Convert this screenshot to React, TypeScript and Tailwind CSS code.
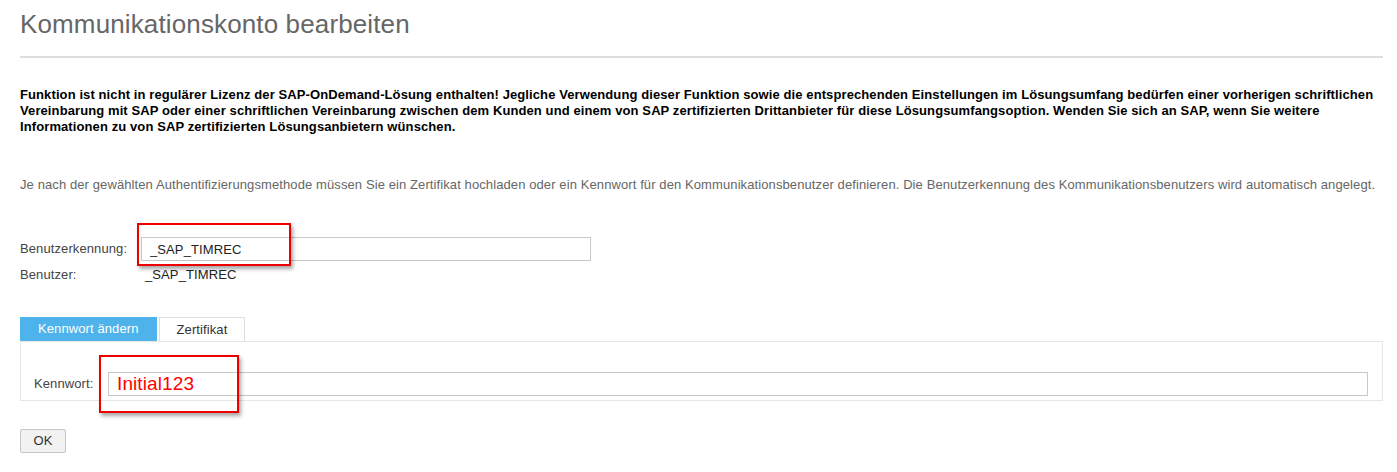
import { useState } from "react";

export default function App() {
  const [tab, setTab] = useState("kennwort");

  return (
    <div className="min-h-screen bg-white pl-[20px] pr-[14px] pt-[9px] tracking-[0.1px] font-['Liberation_Sans',Arial,sans-serif]">

      {/* Header */}
      <h1 className="text-[26px] leading-[30px] tracking-[0.13px] text-[#666666] font-normal">
        Kommunikationskonto bearbeiten
      </h1>
      <div className="mt-[17px] h-[2px] bg-[#dedede]" />

      {/* Lizenzhinweis */}
      <p className="mt-[29px] text-[13px] leading-[16px] font-bold text-black">
        Funktion ist nicht in regulärer Lizenz der SAP-OnDemand-Lösung enthalten! Jegliche Verwendung dieser Funktion sowie die entsprechenden Einstellungen im Lösungsumfang bedürfen einer vorherigen schriftlichen Vereinbarung mit SAP oder einer schriftlichen Vereinbarung zwischen dem Kunden und einem von SAP zertifizierten Drittanbieter für diese Lösungsumfangsoption. Wenden Sie sich an SAP, wenn Sie weitere Informationen zu von SAP zertifizierten Lösungsanbietern wünschen.
      </p>

      <p className="mt-[42px] text-[13px] leading-[16px] text-[#666666]">
        Je nach der gewählten Authentifizierungsmethode müssen Sie ein Zertifikat hochladen oder ein Kennwort für den Kommunikationsbenutzer definieren. Die Benutzerkennung des Kommunikationsbenutzers wird automatisch angelegt.
      </p>

      {/* Benutzerkennung */}
      <div className="relative mt-[44px] flex items-center h-[24px]">
        <span className="w-[121px] text-[13px] text-[#444444]">
          Benutzerkennung:
        </span>
        <input
          readOnly
          value="_SAP_TIMREC"
          className="w-[450px] h-[24px] border border-[#c8c8c8] px-[8px] text-[13px] tracking-[0.1px] text-[#222222] outline-none"
        />
        <div className="absolute left-[117px] top-[-14px] w-[154px] h-[43px] border-2 border-[#ee0000] shadow-[2px_3px_4px_rgba(0,0,0,0.35)] pointer-events-none" />
      </div>

      <div className="mt-[6px] flex text-[13px] leading-[16px]">
        <span className="w-[121px] text-[#444444]">Benutzer:</span>
        <span className="ml-[4px] text-[#222222]">_SAP_TIMREC</span>
      </div>

      {/* Tabs */}
      <div className="mt-[34px] flex gap-[2px]">
        <button
          onClick={() => setTab("kennwort")}
          className={
            tab === "kennwort"
              ? "h-[24px] px-[17px] border border-[#4db3ea] bg-[#4db3ea] text-white text-[13px]"
              : "h-[24px] px-[17px] border border-[#dddddd] bg-white text-[#333333] text-[13px]"
          }
        >
          Kennwort ändern
        </button>
        <button
          onClick={() => setTab("zertifikat")}
          className={
            tab === "zertifikat"
              ? "h-[24px] px-[17px] border border-[#4db3ea] bg-[#4db3ea] text-white text-[13px]"
              : "h-[24px] px-[17px] border border-[#dddddd] border-b-0 bg-white text-[#333333] text-[13px]"
          }
        >
          Zertifikat
        </button>
      </div>

      <div className="relative border border-[#e6e6e6] pt-[30px] pb-[4px] pl-[13px] pr-[14px]">
        <div className="flex items-center h-[24px]">
          <span className="w-[74px] text-[13px] text-[#444444]">Kennwort:</span>
          <input
            readOnly
            value="Initial123"
            className="flex-1 h-[24px] border border-[#c8c8c8] px-[8px] text-[19px] text-[#ff0000] outline-none"
          />
        </div>
        <div className="absolute left-[78px] top-[13px] w-[140px] h-[58px] border-2 border-[#ee0000] shadow-[2px_3px_4px_rgba(0,0,0,0.35)] pointer-events-none" />
      </div>

      {/* OK */}
      <button className="mt-[28px] w-[46px] h-[24px] border border-[#c6c6c6] bg-[#f2f2f2] text-[13px] text-[#333333] rounded-[2px]">
        OK
      </button>

    </div>
  );
}
